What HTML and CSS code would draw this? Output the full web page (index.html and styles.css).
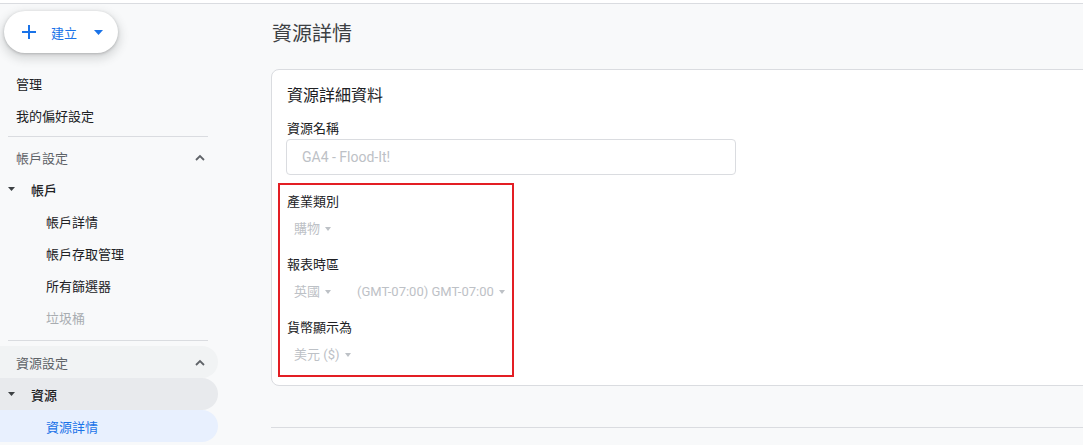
FILE: index.html
```html
<!DOCTYPE html>
<html lang="zh-Hant">
<head>
  <meta charset="UTF-8">
  <title>資源詳情</title>
  <link rel="stylesheet" href="styles.css">
</head>
<body>
  <div class="topbar"></div>
  <div class="layout">
    <!-- Left navigation -->
    <nav class="sidebar">
      <button class="create-btn">
        <svg class="plus" width="14" height="14" viewBox="0 0 14 14"><path d="M7 0v14M0 7h14" stroke="#1a73e8" stroke-width="2"/></svg>
        <span>建立</span>
        <svg class="tri" width="9" height="5" viewBox="0 0 9 5"><path d="M0 0h9L4.5 5z" fill="#1a73e8"/></svg>
      </button>

      <div class="nav-item">管理</div>
      <div class="nav-item">我的偏好設定</div>
      <hr class="divider">

      <div class="nav-item section">帳戶設定
        <svg class="chev" width="10" height="7" viewBox="0 0 10 7"><path d="M1 6l4-4 4 4" stroke="#5f6368" stroke-width="1.8" fill="none"/></svg>
      </div>
      <div class="nav-item parent">
        <svg class="caret" width="7" height="4" viewBox="0 0 7 4"><path d="M0 0h7L3.5 4z" fill="#3c4043"/></svg>帳戶
      </div>
      <div class="nav-item child">帳戶詳情</div>
      <div class="nav-item child">帳戶存取管理</div>
      <div class="nav-item child">所有篩選器</div>
      <div class="nav-item child disabled">垃圾桶</div>
      <hr class="divider wide">

      <div class="nav-item section hovered">資源設定
        <svg class="chev" width="10" height="7" viewBox="0 0 10 7"><path d="M1 6l4-4 4 4" stroke="#5f6368" stroke-width="1.8" fill="none"/></svg>
      </div>
      <div class="nav-item parent open">
        <svg class="caret" width="7" height="4" viewBox="0 0 7 4"><path d="M0 0h7L3.5 4z" fill="#3c4043"/></svg>資源
      </div>
      <div class="nav-item child active">資源詳情</div>
    </nav>

    <!-- Main content -->
    <main class="main">
      <h1 class="page-title">資源詳情</h1>

      <section class="card">
        <h2 class="card-title">資源詳細資料</h2>
        <div class="label">資源名稱</div>
        <div class="input">GA4 - Flood-It!</div>

        <div class="highlight">
          <div class="field">
            <div class="label">產業類別</div>
            <div class="selects">
              <span class="select">購物<i class="arrow"></i></span>
            </div>
          </div>
          <div class="field">
            <div class="label">報表時區</div>
            <div class="selects">
              <span class="select">英國<i class="arrow"></i></span>
              <span class="select tz">(GMT-07:00) GMT-07:00<i class="arrow"></i></span>
            </div>
          </div>
          <div class="field">
            <div class="label">貨幣顯示為</div>
            <div class="selects">
              <span class="select">美元 ($)<i class="arrow"></i></span>
            </div>
          </div>
        </div>
      </section>

      <div class="bottom-line"></div>
    </main>
  </div>
</body>
</html>
```

FILE: styles.css
```css
/* Global settings */
* { box-sizing: border-box; }
body {
  margin: 0;
  font-family: Roboto, "Noto Sans CJK TC", sans-serif;
  background: #f8f9fa;
  color: #202124;
  overflow: hidden;
}

/* Top strip */
.topbar {
  height: 4px;
  background: #fff;
  border-bottom: 1px solid #dadce0;
}

.layout {
  display: grid;
  grid-template-columns: 224px 1fr;
}

/* Sidebar */
.sidebar {
  padding-top: 7px;
}
.create-btn {
  display: flex;
  align-items: center;
  width: 114px;
  height: 42px;
  margin: 0 0 14px 4px;
  padding: 0 0 0 18px;
  border: none;
  border-radius: 21px;
  background: #fff;
  box-shadow: 0 1px 3px rgba(60, 64, 67, 0.3), 0 4px 8px 3px rgba(60, 64, 67, 0.15);
  font-family: inherit;
  font-size: 13px;
  color: #1a73e8;
}
.create-btn .plus { margin-right: 15px; }
.create-btn .tri { margin-left: 17px; }

.nav-item {
  display: flex;
  align-items: center;
  height: 32px;
  margin-right: 6px;
  padding-left: 16px;
  font-size: 13px;
  color: #202124;
  border-radius: 0 16px 16px 0;
}
.nav-item.section {
  color: #5f6368;
  justify-content: space-between;
  padding-right: 13px;
}
.nav-item.parent {
  padding-left: 8px;
  font-weight: 500;
}
.nav-item .caret { margin-right: 16px; }
.nav-item.child { padding-left: 46px; }
.nav-item.disabled { color: #a9adb1; }
.nav-item.hovered { background: #f1f3f4; }
.nav-item.open { background: #e8eaed; }
.nav-item.active {
  background: #e8f0fe;
  color: #1a73e8;
}

.divider {
  border: none;
  border-top: 1px solid #dadce0;
  margin: 5px 16px 4px 8px;
}
.divider.wide { margin: 7px 16px 5px 8px; }

/* Main area */
.main {
  padding-left: 47px;
  margin-right: -20px;
}
.page-title {
  margin: 16px 0 21px 1px;
  font-size: 20px;
  font-weight: 400;
  line-height: 28px;
  color: #3c4043;
}

.card {
  background: #fff;
  border: 1px solid #dadce0;
  border-radius: 8px;
  padding: 14px 15px 8px;
}
.card-title {
  margin: 0 0 11px;
  font-size: 16px;
  font-weight: 400;
  line-height: 24px;
  color: #202124;
}
.label {
  font-size: 13px;
  line-height: 20px;
  color: #202124;
}
.input {
  width: 450px;
  height: 36px;
  margin-left: -1px;
  padding-left: 15px;
  border: 1px solid #dadce0;
  border-radius: 4px;
  font-size: 14px;
  line-height: 34px;
  color: #bdc1c6;
}

/* Highlighted fields (red annotation) */
.highlight {
  width: 236px;
  margin: 8px 0 0 -9px;
  padding: 7px 0 10px 7px;
  border: 2px solid #e31e24;
}
.field + .field { margin-top: 16px; }
.selects {
  display: flex;
  margin-top: 7px;
  padding-left: 7px;
}
.select {
  display: inline-flex;
  align-items: center;
  font-size: 13px;
  line-height: 20px;
  color: #bdc1c6;
}
.select.tz { margin-left: 26px; }
.arrow {
  display: inline-block;
  margin-left: 5px;
  border-left: 3.5px solid transparent;
  border-right: 3.5px solid transparent;
  border-top: 4px solid #bdc1c6;
}

.bottom-line {
  margin-top: 41px;
  border-top: 1px solid #dadce0;
}
```
